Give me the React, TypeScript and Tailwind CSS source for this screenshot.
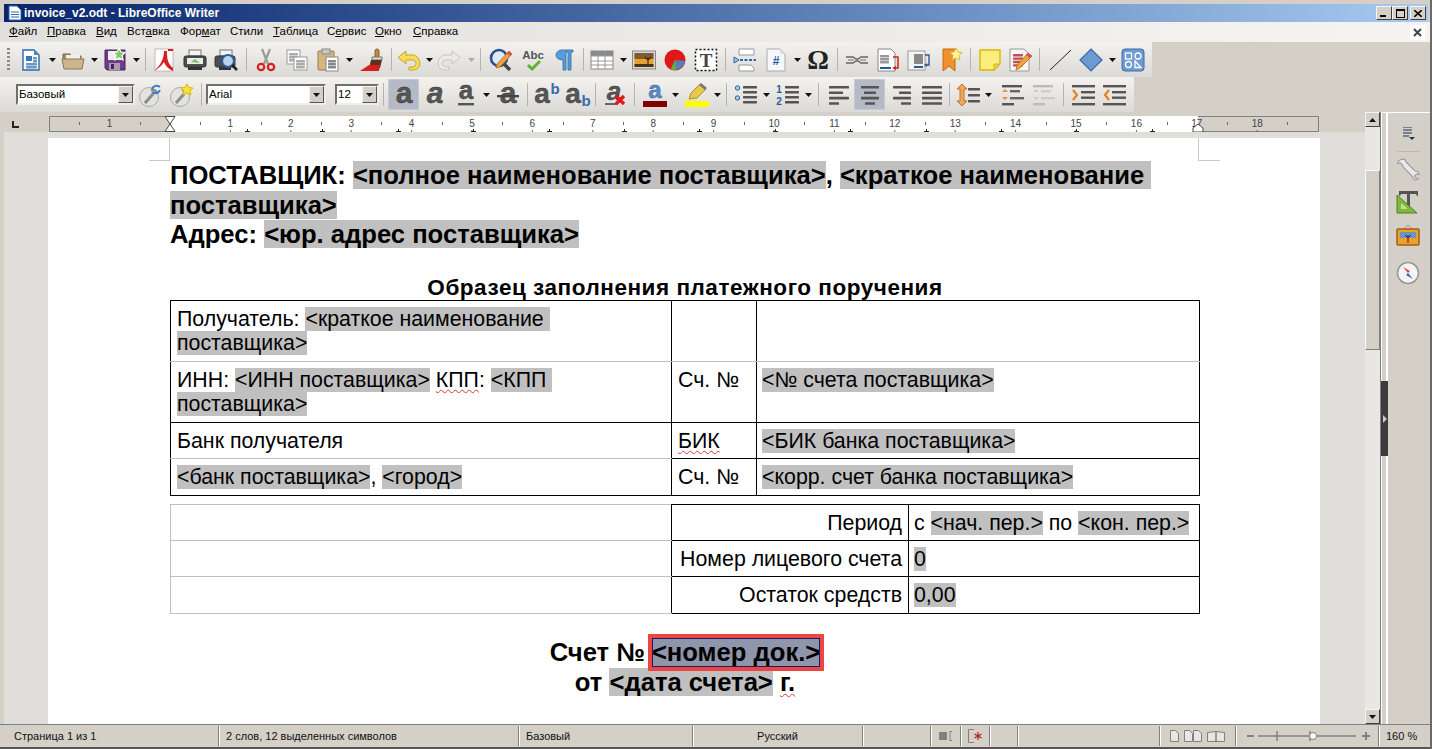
import React from "react";

const ui = "font-['Liberation_Sans',sans-serif]";

function Svg({ w = 24, h = 24, children }: { w?: number; h?: number; children: React.ReactNode }) {
  return (
    <svg width={w} height={h} viewBox={`0 0 ${w} ${h}`} className="block overflow-visible">
      {children}
    </svg>
  );
}

function Lines({ x, y, w, n = 3, gap = 6, color = "#555" }: { x: number; y: number; w: number; n?: number; gap?: number; color?: string }) {
  return (
    <>
      {Array.from({ length: n }).map((_, i) => (
        <rect key={i} x={x} y={y + i * gap} width={w} height={2.4} rx={0.6} fill={color} />
      ))}
    </>
  );
}

function Glyph({ t, x = 12, y = 20, size = 30, color = "#565656", style = "normal", anchor = "middle" }: { t: string; x?: number; y?: number; size?: number; color?: string; style?: string; anchor?: "middle" | "start" }) {
  return (
    <text x={x} y={y} fontSize={size} fontWeight="bold" fontStyle={style} fontFamily="Liberation Sans" fill={color} stroke="#333" strokeWidth={0.4} textAnchor={anchor}>
      {t}
    </text>
  );
}

const NewDoc = () => (
  <Svg>
    <path d="M4 2h11l5 5v15H4z" fill="#fff" stroke="#2a6aa8" strokeWidth="1.4" />
    <path d="M15 2l5 5h-5z" fill="#4a8cc8" />
    <rect x="7" y="8" width="6" height="5" fill="#3a78b8" />
    <Lines x={14} y={9} w={4} n={2} gap={3} color="#6a98c0" />
    <Lines x={7} y={15} w={11} n={2} gap={3} color="#6a98c0" />
  </Svg>
);
const Folder = () => (
  <Svg>
    <path d="M2 6h7l2 2h9v4H2z" fill="#a08a68" stroke="#7d6a4c" />
    <rect x="5" y="7" width="14" height="6" fill="#f2efe8" />
    <path d="M1 11h22l-2 10H3z" fill="#cdb68e" stroke="#8c7753" />
  </Svg>
);
const Save = () => (
  <Svg>
    <path d="M2 2h20v20H4l-2-2z" fill="#6f3a87" stroke="#4a2260" />
    <rect x="5" y="3" width="13" height="9" fill="#f0eaf2" />
    <rect x="6" y="15" width="11" height="7" fill="#a99ab0" />
    <rect x="8" y="16" width="3" height="5" fill="#4a2260" />
    <path d="M16 0l2 4 4 .5-3 3 1 4.5-4-2-4 2 1-4.5-3-3 4-.5z" fill="#7ed05c" stroke="#fff" strokeWidth="1.2" />
  </Svg>
);
const Pdf = () => (
  <Svg>
    <rect x="3" y="1" width="18" height="22" fill="#fff" stroke="#bbb" />
    <path d="M3 22c5-4 9-11 9-19h3v2c0 6 1 11 6 15v3c-4-2-7-4-9-9-2 3-5 6-8 8z" fill="#d81e1e" />
    <rect x="16" y="1" width="5" height="2" fill="#d81e1e" />
  </Svg>
);
const Printer = () => (
  <Svg>
    <rect x="6" y="2" width="12" height="6" fill="#f4f4f4" stroke="#777" />
    <rect x="1" y="8" width="22" height="11" rx="2" fill="#4a4e50" stroke="#333" />
    <rect x="4" y="10" width="16" height="6" fill="#e8eee6" />
    <path d="M8 14l4-3 5 4z" fill="#7ec06a" />
    <rect x="5" y="19" width="14" height="3" fill="#333" />
  </Svg>
);
const Preview = () => (
  <Svg>
    <rect x="6" y="2" width="12" height="6" fill="#f4f4f4" stroke="#777" />
    <rect x="1" y="8" width="20" height="11" rx="2" fill="#4a4e50" stroke="#333" />
    <rect x="5" y="19" width="12" height="3" fill="#333" />
    <circle cx="14" cy="13" r="6" fill="#b8d4ea" stroke="#2d5c98" strokeWidth="2.2" />
    <path d="M18 17l5 5" stroke="#222" strokeWidth="2.6" />
  </Svg>
);
const Cut = () => (
  <Svg>
    <path d="M8 1l6 15M16 1l-6 15" stroke="#9a9a9a" strokeWidth="2.2" />
    <circle cx="7" cy="19" r="3.2" fill="none" stroke="#d81e1e" strokeWidth="2.2" />
    <circle cx="17" cy="19" r="3.2" fill="none" stroke="#d81e1e" strokeWidth="2.2" />
  </Svg>
);
const Copy = () => (
  <Svg>
    <rect x="2" y="2" width="13" height="14" fill="#fff" stroke="#999" />
    <Lines x={4} y={5} w={9} n={3} gap={3} color="#aaa" />
    <rect x="9" y="9" width="13" height="13" fill="#fff" stroke="#999" />
    <Lines x={11} y={12} w={9} n={3} gap={3} color="#aaa" />
  </Svg>
);
const Paste = () => (
  <Svg>
    <rect x="2" y="3" width="16" height="19" rx="1" fill="#d6b680" stroke="#9a7a48" />
    <rect x="6" y="1" width="8" height="5" fill="#c8c8c8" stroke="#888" />
    <rect x="10" y="9" width="12" height="14" fill="#fff" stroke="#888" />
    <Lines x={12} y={12} w={8} n={3} gap={3} color="#888" />
  </Svg>
);
const Brush = () => (
  <Svg>
    <rect x="15" y="1" width="4" height="9" rx="2" fill="#c08a3c" stroke="#8a5f20" />
    <path d="M12 9h10v3H12z" fill="#d8d8d8" stroke="#777" />
    <path d="M11 12h11l-2 8H9z" fill="#5a3416" />
    <path d="M0 23l9-6h11l-1 6z" fill="#d81e1e" />
  </Svg>
);
const Undo = ({ gray = false }: { gray?: boolean }) => (
  <Svg>
    <path d="M10 3L2 9.5l8 6.5v-4h6c3 0 4 1.5 4 3.5s-2 3.5-4 3.5h-3v3h4c4 0 7-3 7-6.5S21 7 17 7h-7z" fill={gray ? "#ecebe8" : "#f6dc5a"} stroke={gray ? "#c4c4c0" : "#c8a428"} />
  </Svg>
);
const Redo = () => (
  <div className="-scale-x-100">
    <Undo gray />
  </div>
);
const Find = () => (
  <Svg>
    <circle cx="10" cy="10" r="8" fill="#dfe8f4" stroke="#2d4f8e" strokeWidth="2.6" />
    <path d="M15 16l6 6" stroke="#444" strokeWidth="3.4" />
    <path d="M8 16L20 3l3 3-12 13-4 1z" fill="#f0a040" stroke="#b06a18" strokeWidth="0.8" />
    <path d="M20 3l3 3-2 2-3-3z" fill="#e05050" />
  </Svg>
);
const Abc = () => (
  <Svg>
    <text x="12" y="11" fontSize="11.5" fontWeight="bold" fontFamily="Liberation Sans" fill="#555" textAnchor="middle">Abc</text>
    <path d="M7 17l4 4 8-8" fill="none" stroke="#62b030" strokeWidth="3" />
  </Svg>
);
const Pilcrow = () => (
  <Svg>
    <path d="M10 2h11v2h-2v18h-3V4h-2v18h-3V12c-4 0-7-2-7-5s3-5 6-5z" fill="#5a9ed8" stroke="#2a6aa8" strokeWidth="0.8" />
  </Svg>
);
const TableIc = () => (
  <Svg>
    <rect x="1" y="3" width="22" height="18" fill="#fff" stroke="#888" />
    <rect x="1" y="3" width="22" height="5" fill="#8a8a8a" />
    <path d="M8 3v18M15 3v18M1 8h22M1 13h22M1 17h22" stroke="#999" strokeWidth="1" fill="none" />
  </Svg>
);
const Picture = () => (
  <Svg>
    <rect x="0.5" y="3" width="23" height="18" fill="#d8d8d8" stroke="#888" />
    <rect x="2.5" y="5" width="19" height="14" fill="#e8a030" />
    <rect x="2.5" y="5" width="19" height="6" fill="#7c5c30" />
    <path d="M2.5 16h19v3h-19z" fill="#4a3418" />
    <path d="M16 16V10M16 12l-3-3M16 12l3-3" stroke="#3a2410" strokeWidth="1.1" fill="none" />
  </Svg>
);
const Chart = () => (
  <Svg>
    <circle cx="12" cy="12" r="10.5" fill="#e01818" />
    <path d="M12 12l10 1c0 2-1 4-2 5z" fill="#4f82c0" />
    <path d="M12 12l8 6c-2 2-5 4-8 4-1 0-3 0-4-1z" fill="#4f82c0" />
    <path d="M12 12l-4 9c1 .8 3 1 5 1z" fill="#62b030" />
  </Svg>
);
const TextBox = () => (
  <Svg>
    <rect x="1.5" y="1.5" width="21" height="21" fill="#fff" stroke="#111" strokeWidth="1.5" strokeDasharray="2 2" />
    <text x="12" y="19" fontSize="19" fontWeight="bold" fontFamily="Liberation Serif" fill="#444" textAnchor="middle">T</text>
  </Svg>
);
const PageBreak = () => (
  <Svg>
    <path d="M6 1h15v6H6z" fill="#fff" stroke="#999" />
    <path d="M6 17h12l3 3v3H6z" fill="#fff" stroke="#999" />
    <path d="M1 9l5 3-5 3z" fill="#a8c8e8" stroke="#2a6aa8" />
    <path d="M7 12h16" stroke="#2a6aa8" strokeWidth="2" strokeDasharray="3 1.5" />
  </Svg>
);
const Field = () => (
  <Svg>
    <path d="M3 1h13l5 5v17H3z" fill="#f6f8fb" stroke="#aaa" />
    <path d="M16 1l5 5h-5z" fill="#ddd" />
    <text x="12" y="17" fontSize="12" fontWeight="bold" fontFamily="Liberation Sans" fill="#2a5a98" textAnchor="middle">#</text>
  </Svg>
);
const Omega = () => (
  <Svg>
    <text x="12" y="21" fontSize="27" fontWeight="bold" fontFamily="Liberation Serif" fill="#222" textAnchor="middle">Ω</text>
  </Svg>
);
const Chain = () => (
  <Svg>
    <path d="M1 9h7l3 2h2l3-2h7M1 15h7l3-2h2l3 2h7" fill="none" stroke="#666" strokeWidth="1.4" />
    <path d="M3 12h6M15 12h6" stroke="#999" strokeWidth="1.4" />
  </Svg>
);
const Footnote = () => (
  <Svg>
    <path d="M2 1h13l4 4v18H2z" fill="#fff" stroke="#888" />
    <Lines x={4} y={7} w={9} n={3} gap={3} color="#999" />
    <rect x="4" y="19" width="11" height="2" fill="#2a5a98" />
    <path d="M17 9h5v11h-4" fill="none" stroke="#d81e1e" strokeWidth="1.5" />
    <path d="M20 18l-4 2 4 2z" fill="#d81e1e" />
  </Svg>
);
const Caption = () => (
  <Svg>
    <rect x="1" y="3" width="17" height="19" fill="#f4f4f4" stroke="#999" />
    <rect x="7" y="6" width="9" height="10" fill="#888" />
    <rect x="7" y="18" width="9" height="2" fill="#2a5a98" />
    <path d="M18 7h4v10h-3" fill="none" stroke="#2a5a98" strokeWidth="1.4" />
    <path d="M20 15l-3 2 3 2z" fill="#2a5a98" />
  </Svg>
);
const Bookmark = () => (
  <Svg>
    <path d="M5 1h12v22l-6-5-6 5z" fill="#f09030" stroke="#c06a10" />
    <path d="M18 0l2 4 4 .5-3 3 1 4.5-4-2-4 2 1-4.5-3-3 4-.5z" fill="#fff4a0" stroke="#e0b820" />
  </Svg>
);
const Note = () => (
  <Svg>
    <path d="M2 2h20v14l-6 6H2z" fill="#fbee7c" stroke="#d8b800" strokeWidth="1.4" />
    <path d="M16 22v-6h6z" fill="#e8d050" stroke="#d8b800" />
  </Svg>
);
const EditDoc = () => (
  <Svg>
    <path d="M2 1h14l5 5v17H2z" fill="#f6f6f6" stroke="#999" />
    <Lines x={5} y={6} w={10} n={4} gap={3.4} color="#c05050" />
    <path d="M8 22l1-5L20 5l4 3-12 12z" fill="#f0a040" stroke="#b06a18" strokeWidth="0.8" />
    <path d="M20 5l4 3-2 2-4-3z" fill="#e05050" />
  </Svg>
);
const LineIc = () => (
  <Svg>
    <path d="M2 22L23 2" stroke="#222" strokeWidth="1" />
  </Svg>
);
const Diamond = () => (
  <Svg>
    <path d="M12 1l11 11-11 11L1 12z" fill="#6d9ad0" stroke="#3a6aa8" strokeWidth="1.2" />
  </Svg>
);
const Shapes = () => (
  <Svg>
    <rect x="1" y="1" width="22" height="22" rx="3" fill="#6d9ad0" stroke="#3a6aa8" />
    <rect x="4.5" y="5" width="6" height="6" fill="none" stroke="#fff" strokeWidth="1.3" />
    <circle cx="17" cy="8" r="3" fill="none" stroke="#fff" strokeWidth="1.3" />
    <circle cx="7.5" cy="16.5" r="3" fill="none" stroke="#fff" strokeWidth="1.3" />
    <path d="M14 19.5V13l6 6.5z" fill="none" stroke="#fff" strokeWidth="1.3" />
  </Svg>
);
const Wrench = ({ badge }: { badge: "sync" | "star" }) => (
  <Svg>
    <circle cx="10" cy="14" r="9.5" fill="#e2e2e0" stroke="#a8a8a8" />
    <path d="M6 20l8-9" stroke="#8a8a8a" strokeWidth="3" />
    <path d="M12 7.5a4 4 0 016 3" fill="none" stroke="#8a8a8a" strokeWidth="2.4" />
    {badge === "star" ? (
      <path d="M17 1l2 3.5 4 .5-3 3 1 4-4-2-4 2 1-4-3-3 4-.5z" fill="#f8e040" stroke="#d8b800" />
    ) : (
      <path d="M13 6a5 5 0 018-2M21 7a5 5 0 01-8 2" fill="none" stroke="#3a78c8" strokeWidth="2" />
    )}
  </Svg>
);
const Strike = () => (
  <Svg>
    <Glyph t="a" />
    <rect x="1" y="12" width="22" height="2.4" fill="#444" />
  </Svg>
);
const Under = () => (
  <Svg>
    <Glyph t="a" size={26} y={16} />
    <rect x="4" y="20" width="16" height="2.4" fill="#555" />
  </Svg>
);
const Sup = ({ sub = false }: { sub?: boolean }) => (
  <Svg w={26}>
    <Glyph t="a" x={8} y={20} size={28} />
    <text x="21" y={sub ? 23 : 11} fontSize="15" fontWeight="bold" fontFamily="Liberation Sans" fill="#3a6ab0" textAnchor="middle">b</text>
  </Svg>
);
const Clear = () => (
  <Svg>
    <Glyph t="a" y={17} size={26} style="italic" />
    <rect x="3" y="20" width="12" height="2" fill="#666" />
    <path d="M14 13l8 8M22 13l-8 8" stroke="#e01818" strokeWidth="3.4" />
  </Svg>
);
const FontColor = () => (
  <Svg>
    <text x="12" y="15" fontSize="24" fontWeight="bold" fontFamily="Liberation Sans" fill="#5a8ac8" stroke="#2a5a98" strokeWidth="0.4" textAnchor="middle">a</text>
    <rect x="0" y="18" width="24" height="6" fill="#800000" />
  </Svg>
);
const Highlight = () => (
  <Svg>
    <path d="M4 16l2-6L15 1l6 5-9 9z" fill="#e8c848" stroke="#b09020" />
    <path d="M14 2l6 5 2-2-6-5z" fill="#777" />
    <rect x="0" y="18" width="24" height="6" fill="#ffff00" />
  </Svg>
);
const Bullets = () => (
  <Svg>
    <circle cx="3.5" cy="5" r="2.2" fill="#a8c8e8" stroke="#2a6aa8" />
    <circle cx="3.5" cy="15" r="2.2" fill="#a8c8e8" stroke="#2a6aa8" />
    <Lines x={9} y={3} w={14} n={4} gap={5} />
  </Svg>
);
const Numbered = () => (
  <Svg>
    <text x="3" y="10" fontSize="10" fontWeight="bold" fontFamily="Liberation Sans" fill="#2a5a98" textAnchor="middle">1</text>
    <text x="3" y="22" fontSize="10" fontWeight="bold" fontFamily="Liberation Sans" fill="#2a5a98" textAnchor="middle">2</text>
    <Lines x={9} y={3} w={14} n={4} gap={5} />
  </Svg>
);
const Align = ({ kind }: { kind: "l" | "c" | "r" | "j" }) => {
  const rows = { l: [[2, 20], [2, 14], [2, 20], [2, 10]], c: [[3, 18], [6, 12], [3, 18], [7, 10]], r: [[4, 18], [10, 12], [4, 18], [12, 10]], j: [[2, 20], [2, 20], [2, 20], [2, 20]] }[kind];
  return (
    <Svg>
      {rows.map(([x, w], i) => (
        <rect key={i} x={x} y={3 + i * 5.4} width={w} height={2.6} rx={0.6} fill="#555" />
      ))}
    </Svg>
  );
};
const LineSpacing = () => (
  <Svg>
    <path d="M6 1l5 5H8v12h3l-5 5-5-5h3V6H1z" fill="#f0a860" stroke="#c87020" />
    <Lines x={12} y={5} w={12} n={3} gap={6} />
  </Svg>
);
const ParaSpace = ({ dim = false }: { dim?: boolean }) => (
  <Svg>
    <rect x="2" y="2" width="20" height="2.4" fill={dim ? "#bbb" : "#555"} />
    <rect x="10" y="7" width="10" height="2.4" fill={dim ? "#ccc" : "#666"} />
    <rect x="10" y="14" width="14" height="2.4" fill={dim ? "#ccc" : "#666"} />
    <rect x="2" y="20" width="12" height="2.4" fill={dim ? "#bbb" : "#555"} />
    <path d="M2 9l3-3 3 3zM2 14l3 3 3-3z" fill={dim ? "#ccc" : "#e89040"} />
  </Svg>
);
const Indent = ({ back = false }: { back?: boolean }) => (
  <Svg>
    <rect x="0" y="2" width="23" height="2.4" fill="#555" />
    <rect x="9" y="8" width="14" height="2.4" fill="#555" />
    <rect x="9" y="13.5" width="14" height="2.4" fill="#555" />
    <rect x="0" y="20" width="23" height="2.4" fill="#555" />
    <path d={back ? "M6 7l-4 5 4 5" : "M1 7l4 5-4 5"} fill="none" stroke="#e88020" strokeWidth="2.2" />
  </Svg>
);

function Btn({ children, active = false, w = "w-[31px]" }: { children: React.ReactNode; active?: boolean; w?: string }) {
  return (
    <div className={`${w} h-[31px] flex items-center justify-center shrink-0 ${active ? "bg-[#b6b9c6] border border-[#c6c8d2]" : ""}`}>
      {children}
    </div>
  );
}
const Drop = ({ dim = false }: { dim?: boolean }) => (
  <div className="w-[11px] shrink-0 flex items-center justify-center">
    <svg width="7" height="4" viewBox="0 0 7 4">
      <path d="M0 0h7L3.5 4z" fill={dim ? "#aaa" : "#111"} />
    </svg>
  </div>
);
const Sep = ({ w = "w-[7px]" }: { w?: string }) => (
  <div className={`${w} shrink-0 flex justify-center`}>
    <div className="w-px h-[23px] bg-[#b5b3ae]" />
  </div>
);
const Grip = () => (
  <div className="w-[3px] h-[23px] ml-[7px] mr-[5.5px] shrink-0 bg-[repeating-linear-gradient(to_bottom,#8a8a86_0,#8a8a86_2px,transparent_2px,transparent_4px)]" />
);

function Combo({ value, w }: { value: string; w: string }) {
  return (
    <div className={`${w} h-[21px] shrink-0 border-2 border-t-[#6f6f6c] border-l-[#6f6f6c] border-r-[#eeeeea] border-b-[#eeeeea] bg-white flex items-center justify-between`}>
      <span className={`pl-[1px] text-[11.5px] text-black ${ui}`}>{value}</span>
      <div className="w-[15px] h-[17px] bg-[#d4d0c8] border border-[#f4f4f0] border-r-[#555] border-b-[#555] flex items-center justify-center">
        <svg width="7" height="4" viewBox="0 0 7 4">
          <path d="M0 0h7L3.5 4z" fill="#111" />
        </svg>
      </div>
    </div>
  );
}

function WinBtn({ children }: { children: React.ReactNode }) {
  return (
    <div className="w-[16px] h-[14px] bg-[#d4d0c8] border border-[#f4f4f0] border-r-[#404040] border-b-[#404040] flex items-center justify-center">
      {children}
    </div>
  );
}

function TitleBar() {
  return (
    <div className="h-[18px] mt-[4px] ml-[4px] mr-[2px] shrink-0 flex items-center justify-between bg-gradient-to-r from-[#0a246a] to-[#a6caf0]">
      <div className="flex items-center">
        <svg width="14" height="16" viewBox="0 0 14 16" className="ml-[4px]">
          <path d="M1 1h8l4 4v10H1z" fill="#fff" stroke="#2a6aa8" />
          <path d="M3 7h8M3 9.5h8M3 12h8" stroke="#2a6aa8" />
        </svg>
        <span className={`ml-[2px] text-[12px] font-bold text-white ${ui}`}>invoice_v2.odt - LibreOffice Writer</span>
      </div>
      <div className="flex items-center mr-[2px]">
        <WinBtn>
          <div className="w-[6px] h-[2px] bg-black mt-[6px] -ml-[2px]" />
        </WinBtn>
        <WinBtn>
          <div className="w-[9px] h-[9px] border border-black border-t-2" />
        </WinBtn>
        <div className="w-[2px]" />
        <WinBtn>
          <svg width="8" height="7" viewBox="0 0 8 7">
            <path d="M0 0l8 7M8 0L0 7" stroke="#000" strokeWidth="1.6" />
          </svg>
        </WinBtn>
      </div>
    </div>
  );
}

function MenuBar() {
  const items: [string, string, string, string][] = [
    ["", "Ф", "айл", "w-[38px]"],
    ["", "П", "равка", "w-[49px]"],
    ["", "В", "ид", "w-[31px]"],
    ["Вст", "а", "вка", "w-[53px]"],
    ["Фор", "м", "ат", "w-[50px]"],
    ["Стили", "", "", "w-[43px]"],
    ["", "Т", "аблица", "w-[54px]"],
    ["С", "е", "рвис", "w-[48px]"],
    ["", "О", "кно", "w-[38px]"],
    ["", "С", "правка", "w-[60px]"],
  ];
  return (
    <div className="h-[20px] shrink-0 flex items-center pl-[9px] pr-[5px] bg-gradient-to-r from-[#e2e0dc] to-[#f5f4f1]">
      {items.map(([a, u, b, w]) => (
        <span key={a + u + b} className={`${w} text-[11.5px] text-black ${ui}`}>
          {a}
          <span className="underline">{u}</span>
          {b}
        </span>
      ))}
      <div className="ml-auto w-[15px] h-[15px] bg-white flex items-center justify-center">
        <svg width="9" height="9" viewBox="0 0 9 9">
          <path d="M1 1l7 7M8 1L1 8" stroke="#444" strokeWidth="2" />
        </svg>
      </div>
    </div>
  );
}

function ToolbarOne() {
  return (
    <div className="h-[35px] shrink-0 bg-[#d4d0c8]">
      <div className="w-[1152px] h-full flex items-center bg-gradient-to-b from-[#f3f2ef] to-[#dcdad6]">
        <Grip />
        <Btn><NewDoc /></Btn><Drop />
        <Btn><Folder /></Btn><Drop />
        <Btn><Save /></Btn><Drop />
        <Sep />
        <Btn><Pdf /></Btn><Btn><Printer /></Btn><Btn><Preview /></Btn>
        <Sep w="w-[9px]" />
        <Btn><Cut /></Btn><Btn><Copy /></Btn><Btn><Paste /></Btn><Drop />
        <Btn w="w-[35px]"><Brush /></Btn>
        <Sep w="w-[3px]" />
        <Btn><Undo /></Btn><Drop />
        <Btn><Redo /></Btn><Drop dim />
        <Sep w="w-[8px]" />
        <Btn w="w-[33px]"><Find /></Btn><Btn><Abc /></Btn><Btn><Pilcrow /></Btn>
        <Sep />
        <Btn><TableIc /></Btn><Drop />
        <Btn><Picture /></Btn><Btn><Chart /></Btn><Btn><TextBox /></Btn>
        <Sep w="w-[8px]" />
        <Btn><PageBreak /></Btn><Btn><Field /></Btn><Drop />
        <Btn><Omega /></Btn>
        <Sep w="w-[8px]" />
        <Btn><Chain /></Btn><Btn><Footnote /></Btn><Btn><Caption /></Btn><Btn><Bookmark /></Btn>
        <Sep w="w-[9px]" />
        <Btn w="w-[30px]"><Note /></Btn><Btn w="w-[30px]"><EditDoc /></Btn>
        <Sep w="w-[10px]" />
        <Btn><LineIc /></Btn><Btn><Diamond /></Btn><Drop />
        <Btn><Shapes /></Btn>
      </div>
    </div>
  );
}

function ToolbarTwo() {
  return (
    <div className="h-[35px] shrink-0 bg-[#d4d0c8]">
      <div className="w-[1134px] h-full flex items-center bg-gradient-to-b from-[#f3f2ef] to-[#dcdad6]">
        <div className="w-[16px] shrink-0" />
        <Combo value="Базовый" w="w-[119px]" />
        <Btn><Wrench badge="sync" /></Btn>
        <Btn><Wrench badge="star" /></Btn>
        <Sep w="w-[9px]" />
        <Combo value="Arial" w="w-[120px]" />
        <div className="w-[9px] shrink-0" />
        <Combo value="12" w="w-[44px]" />
        <Sep w="w-[9px]" />
        <Btn active><Svg><Glyph t="a" /></Svg></Btn>
        <Btn><Svg><Glyph t="a" style="italic" /></Svg></Btn>
        <Btn><Under /></Btn><Drop />
        <Btn><Strike /></Btn>
        <Sep w="w-[8px]" />
        <Btn><Sup /></Btn><Btn><Sup sub /></Btn>
        <Sep w="w-[5px]" />
        <Btn><Clear /></Btn>
        <Sep w="w-[10px]" />
        <Btn><FontColor /></Btn><Drop />
        <Btn><Highlight /></Btn><Drop />
        <Sep w="w-[7px]" />
        <Btn><Bullets /></Btn><Drop />
        <Btn><Numbered /></Btn><Drop />
        <Sep w="w-[9px]" />
        <Btn><Align kind="l" /></Btn><Btn active><Align kind="c" /></Btn><Btn><Align kind="r" /></Btn><Btn><Align kind="j" /></Btn>
        <Sep w="w-[5px]" />
        <Btn><LineSpacing /></Btn><Drop />
        <div className="w-[2px] shrink-0" />
        <Btn><ParaSpace /></Btn><Btn><ParaSpace dim /></Btn>
        <Sep w="w-[10px]" />
        <Btn><Indent /></Btn><Btn><Indent back /></Btn>
      </div>
    </div>
  );
}

function Ruler() {
  const unit = 60.4;
  const zero = 121;
  const nums = Array.from({ length: 19 }, (_, i) => i);
  const tabs = Array.from({ length: 13 }, (_, i) => 198 + i * 75.4);
  return (
    <svg width="1270" height="20" viewBox="0 0 1270 20" className="block">
      <rect x="0.5" y="4.5" width="1269" height="15" fill="#d4d0c8" stroke="#808080" />
      <rect x="121" y="4" width="1028" height="16" fill="#fff" />
      <text x="60.5" y="15" fontSize="10" fontFamily="Liberation Sans" fill="#444" textAnchor="middle">1</text>
      <path d="M30.5 10v3M91.5 10v3" stroke="#666" />
      {nums.map((i) => (
        <g key={i}>
          {i > 0 && (
            <text x={zero + i * unit} y="15" fontSize="10" fontFamily="Liberation Sans" fill="#444" textAnchor="middle">{i}</text>
          )}
          {i > 0 && <path d={`M${zero + i * unit} 18v2`} stroke="#666" />}
          <path d={`M${Math.round(zero + (i + 0.5) * unit) + 0.5} 10v3`} stroke="#666" />
        </g>
      ))}
      {tabs.map((x) => (
        <path key={x} d={`M${Math.round(x) - 2} 19.5h5M${Math.round(x) + 0.5} 17v3`} stroke="#222" fill="none" />
      ))}
      <path d="M116 4.5h10l-5 7.5 5 7.5h-10l5-7.5z" fill="#fff" stroke="#444" />
      <path d="M1149 12l5 4v4h-10v-4z" fill="#fff" stroke="#444" />
    </svg>
  );
}

const hl = "bg-[#c0c0c0]";

function DocBody() {
  return (
    <div className="h-full bg-white relative overflow-hidden pt-[23px] pl-[122px] text-black font-['Liberation_Sans',sans-serif]">
      <div className="absolute left-[101px] top-0 w-[21px] h-[23px] border-r border-b border-[#c8c8c8]" />
      <div className="absolute left-[1150px] top-0 w-[22px] h-[23px] border-l border-b border-[#c8c8c8]" />
      <div className="w-[1030px] text-[25.6px] leading-[29.5px] font-bold whitespace-nowrap">
        <div>
          ПОСТАВЩИК: <span className={hl}>&lt;полное наименование поставщика&gt;</span>, <span className={hl}>&lt;краткое наименование&nbsp;</span>
        </div>
        <div><span className={hl}>поставщика&gt;</span></div>
        <div>
          Адрес: <span className={hl}>&lt;юр. адрес поставщика&gt;</span>
        </div>
      </div>
      <div className="w-[1030px] mt-[25px] h-[25px] text-center text-[22.5px] leading-[26px] font-bold tracking-[0.54px]">Образец заполнения платежного поручения</div>

      <table className="table-fixed border-collapse w-[1030px] text-[21.33px] leading-[24.5px]">
        <colgroup>
          <col className="w-[501px]" />
          <col className="w-[85px]" />
          <col />
        </colgroup>
        <tbody>
          <tr className="h-[61px]">
            <td className="border border-black border-b-[#c0c0c0] align-top px-[6px] pt-[6px]">
              Получатель: <span className={hl}>&lt;краткое наименование&nbsp;</span>
              <br />
              <span className={hl}>поставщика&gt;</span>
            </td>
            <td className="border border-black border-b-[#c0c0c0]" />
            <td className="border border-black border-b-[#c0c0c0]" />
          </tr>
          <tr className="h-[61px]">
            <td className="border border-black border-t-[#c0c0c0] align-top px-[6px] pt-[6px]">
              ИНН: <span className={hl}>&lt;ИНН поставщика&gt;</span> <Squiggle>КПП</Squiggle>: <span className={hl}>&lt;КПП&nbsp;</span>
              <br />
              <span className={hl}>поставщика&gt;</span>
            </td>
            <td className="border border-black border-t-[#c0c0c0] align-top px-[6px] pt-[6px]">Сч. №</td>
            <td className="border border-black border-t-[#c0c0c0] align-top pl-[5px] pt-[6px]"><span className={hl}>&lt;№ счета поставщика&gt;</span></td>
          </tr>
          <tr className="h-[36px]">
            <td className="border border-black border-b-[#c0c0c0] align-top px-[6px] pt-[6px]">Банк получателя</td>
            <td className="border border-black align-top px-[6px] pt-[6px]"><Squiggle>БИК</Squiggle></td>
            <td className="border border-black align-top pl-[5px] pt-[6px]"><span className={hl}>&lt;БИК банка поставщика&gt;</span></td>
          </tr>
          <tr className="h-[37px]">
            <td className="border border-black border-t-[#c0c0c0] align-top px-[6px] pt-[6px]">
              <span className={hl}>&lt;банк поставщика&gt;</span>, <span className={hl}>&lt;город&gt;</span>
            </td>
            <td className="border border-black align-top px-[6px] pt-[6px]">Сч. №</td>
            <td className="border border-black align-top pl-[5px] pt-[6px]"><span className={hl}>&lt;корр. счет банка поставщика&gt;</span></td>
          </tr>
        </tbody>
      </table>

      <table className="table-fixed border-collapse w-[1030px] mt-[8px] text-[21.33px] leading-[24.5px]">
        <colgroup>
          <col className="w-[501px]" />
          <col className="w-[237px]" />
          <col />
        </colgroup>
        <tbody>
          <tr className="h-[36px]">
            <td className="border border-[#c0c0c0] border-r-black" />
            <td className="border border-black align-top text-right px-[6px] pt-[6px]">Период</td>
            <td className="border border-black align-top pl-[5px] pt-[6px]">
              с <span className={hl}>&lt;нач. пер.&gt;</span> по <span className={hl}>&lt;кон. пер.&gt;</span>
            </td>
          </tr>
          <tr className="h-[36px]">
            <td className="border border-[#c0c0c0] border-r-black" />
            <td className="border border-black align-top text-right px-[6px] pt-[6px]">Номер лицевого счета</td>
            <td className="border border-black align-top pl-[5px] pt-[6px]"><span className={hl}>0</span></td>
          </tr>
          <tr className="h-[37px]">
            <td className="border border-[#c0c0c0] border-r-black" />
            <td className="border border-black align-top text-right px-[6px] pt-[6px]">Остаток средств</td>
            <td className="border border-black align-top pl-[5px] pt-[6px]"><span className={hl}>0,00</span></td>
          </tr>
        </tbody>
      </table>

      <div className="w-[1030px] mt-[23px] text-center text-[25.6px] leading-[30px] font-bold">
        <div>
          Счет № <span className="relative z-10 inline-block leading-[29px] bg-[#8f95ab] outline-1 outline-[#14205a] -outline-offset-1 shadow-[0_0_0_4px_#ee4444]">&lt;номер док.&gt;</span>
        </div>
        <div>
          от <span className={hl}>&lt;дата счета&gt;</span> <Squiggle>г.</Squiggle>
        </div>
      </div>
    </div>
  );
}

function Squiggle({ children }: { children: React.ReactNode }) {
  return <span className="underline decoration-wavy decoration-[#e03030] decoration-1 underline-offset-2">{children}</span>;
}

function VScroll() {
  return (
    <div className="w-[16px] shrink-0 flex flex-col bg-[#e8e7e4] border-r border-[#808080]">
      <ScrollBtn />
      <div className="h-[43px] shrink-0" />
      <div className="h-[180px] shrink-0 bg-[#d4d0c8] border border-[#fbfbf8] border-r-[#808080] border-b-[#808080]" />
      <div className="flex-1" />
      <ScrollBtn down />
    </div>
  );
}

function ScrollBtn({ down = false }: { down?: boolean }) {
  return (
    <div className="h-[15px] shrink-0 bg-[#d4d0c8] border border-[#f4f4f0] border-r-[#404040] border-b-[#404040] flex items-center justify-center">
      <svg width="7" height="4" viewBox="0 0 7 4">
        <path d={down ? "M0 0h7L3.5 4z" : "M3.5 0L7 4H0z"} fill="#111" />
      </svg>
    </div>
  );
}

function Sidebar() {
  const rail = "border-l border-r-2 border-white";
  return (
    <div className="flex-1 flex border-t border-white bg-[#d4d0c8]">
      <div className="w-[7px] shrink-0 flex flex-col">
        <div className={`h-[268px] shrink-0 ${rail}`} />
        <div className="h-[75px] shrink-0 bg-[#3c3c3c] flex items-center justify-center">
          <svg width="4" height="8" viewBox="0 0 4 8">
            <path d="M0 0l4 4-4 4z" fill="#c8c8c8" />
          </svg>
        </div>
        <div className={`flex-1 ${rail}`} />
      </div>
      <div className="flex-1 flex flex-col items-center pt-[14px] pr-[2px]">
        <svg width="14" height="13" viewBox="0 0 14 13">
          <path d="M2 0h9M2 3h9M2 6h9M2 9h6" stroke="#1f2f5f" />
          <path d="M8 10h6l-3 3z" fill="#1f2f5f" />
        </svg>
        <div className="w-[23px] h-px bg-[#bcb9b2] mt-[11px]" />
        <svg width="24" height="24" viewBox="0 0 24 24" className="mt-[6px]">
          <path d="M8 1.5a5 5 0 00-6.5 4l3-.5 2 2 1 2.5 9 9c0 2 1 3.500 3.500 3.500 1 0 2-.5 2.500-1.500l-3-.5-1-2 2-2 2.500.5c0-2-1.500-3.500-4-3.500l-9-9c0-1-1-2.500-2-3z" fill="#e8e8e8" stroke="#999" strokeWidth="1.1" />
        </svg>
        <svg width="24" height="24" viewBox="0 0 24 24" className="mt-[8px]">
          <path d="M3 1h19v5h-1l-1-2h-6v14h-3V4H5L4 6H3z" fill="#555" />
          <path d="M1 23V5l20 18z" fill="#80b840" stroke="#4a8020" />
          <path d="M5 19v-6l7 6z" fill="#c0e090" />
        </svg>
        <svg width="24" height="22" viewBox="0 0 24 22" className="mt-[10px]">
          <path d="M7 6l5-5 5 5" fill="none" stroke="#999" />
          <rect x="1" y="5" width="22" height="16" rx="1" fill="#e8a030" stroke="#a06010" strokeWidth="1.5" />
          <rect x="4" y="8" width="16" height="6" fill="#6a94c8" />
          <path d="M12 19v-8M12 14l-3-3M12 14l3-3" stroke="#3a2410" fill="none" />
        </svg>
        <svg width="24" height="24" viewBox="0 0 24 24" className="mt-[15px]">
          <circle cx="12" cy="12" r="10.5" fill="#f4f4f4" stroke="#999" strokeWidth="1.6" />
          <path d="M7 6l7 4-2 2z" fill="#e04040" />
          <path d="M17 18l-7-4 2-2z" fill="#4060c0" />
        </svg>
      </div>
    </div>
  );
}

function StatusCell({ w, children, cls = "" }: { w: string; children?: React.ReactNode; cls?: string }) {
  return (
    <div className={`${w} shrink-0 h-[20px] flex items-center border-r border-[#808080] shadow-[1px_0_0_#fff] ${cls}`}>
      {children}
    </div>
  );
}

function StatusBar() {
  return (
    <div className={`h-[25px] shrink-0 flex items-center bg-[#d4d0c8] border-t border-[#808080] border-b-2 border-b-[#555] text-[11px] text-[#111] ${ui}`}>
      <StatusCell w="w-[219px]" cls="pl-[14px]">Страница 1 из 1</StatusCell>
      <StatusCell w="w-[300px]" cls="pl-[7px]">2 слов, 12 выделенных символов</StatusCell>
      <StatusCell w="w-[174px]" cls="pl-[7px]">Базовый</StatusCell>
      <StatusCell w="w-[170px]" cls="justify-center">Русский</StatusCell>
      <StatusCell w="w-[68px]" />
      <StatusCell w="w-[30px]" cls="justify-center">
        <svg width="14" height="10" viewBox="0 0 14 10">
          <rect x="0" y="1" width="8" height="8" fill="#808080" />
          <path d="M13 .5h-2v9h2" fill="none" stroke="#808080" />
        </svg>
      </StatusCell>
      <StatusCell w="w-[29px]" cls="justify-center">
        <svg width="14" height="14" viewBox="0 0 14 14">
          <path d="M6 13.5H.5V.5H6" fill="none" stroke="#808080" />
          <path d="M10 3v8M6.5 5l7 4M13.5 5l-7 4" stroke="#b02020" strokeWidth="1.2" />
        </svg>
      </StatusCell>
      <StatusCell w="w-[28px]" />
      <StatusCell w="w-[142px]" />
      <StatusCell w="w-[76px]" cls="justify-center gap-[5px]">
        <svg width="9" height="12" viewBox="0 0 9 12"><path d="M.5.5h5l3 3v8h-8z" fill="#e8e6e0" stroke="#808080" /></svg>
        <svg width="18" height="12" viewBox="0 0 18 12"><path d="M.5.5h5l3 3v8h-8zM9.5.5h5l3 3v8h-8z" fill="#e8e6e0" stroke="#808080" /></svg>
        <svg width="18" height="12" viewBox="0 0 18 12"><path d="M9 1.5L.5 2.5v9H9zM9 1.5l8.5 1v9H9z" fill="#e8e6e0" stroke="#808080" /></svg>
      </StatusCell>
      <StatusCell w="w-[143px]" cls="justify-center">
        <svg width="127" height="14" viewBox="0 0 127 14">
          <path d="M3 7h7" stroke="#808080" strokeWidth="2" />
          <path d="M14 7h98" stroke="#808080" strokeWidth="1.5" />
          <path d="M33 2v10M66 2v10" stroke="#808080" strokeWidth="1.5" />
          <circle cx="69" cy="7" r="3.5" fill="#fff" stroke="#808080" />
          <path d="M118 7h8M122 3v8" stroke="#808080" strokeWidth="2" />
        </svg>
      </StatusCell>
      <div className="flex-1 pl-[7px]">160 %</div>
    </div>
  );
}

export default function App() {
  return (
    <div className="w-[1432px] h-[749px] overflow-hidden flex flex-col bg-[#d4d0c8] border-r-2 border-[#6a6a68]">
      <TitleBar />
      <MenuBar />
      <ToolbarOne />
      <ToolbarTwo />
      <div className="flex-1 min-h-0 flex">
        <div className="w-[1365px] shrink-0 flex flex-col min-h-0">
          <div className="h-[20px] shrink-0 flex bg-[#d4d0c8]">
            <div className="w-[49px] shrink-0 flex items-center pl-[12px] pt-[4px]">
              <svg width="7" height="7" viewBox="0 0 7 7">
                <path d="M1 0v6h6" fill="none" stroke="#222" strokeWidth="2" />
              </svg>
            </div>
            <Ruler />
          </div>
          <div className="flex-1 min-h-0 bg-[#dfdedb] pt-[6px] pl-[48px] pr-[45px] border-l-[4px] border-[#d4d0c8] [&>div]:-ml-[4px]">
            <DocBody />
          </div>
        </div>
        <VScroll />
        <Sidebar />
      </div>
      <StatusBar />
    </div>
  );
}
